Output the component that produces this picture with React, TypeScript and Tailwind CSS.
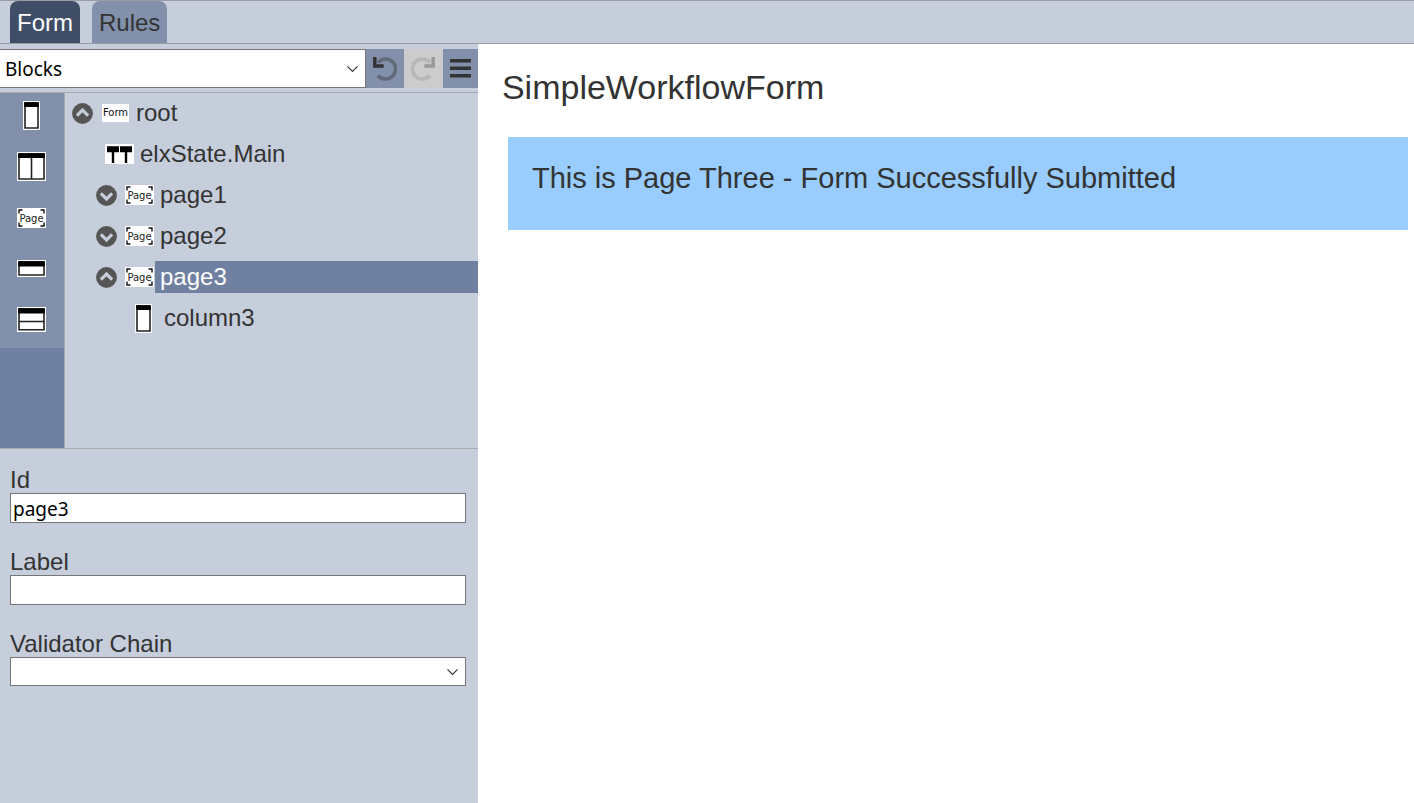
import { useState } from "react";
import type { ReactNode } from "react";
import clsx from "clsx";

function FormIcon() {
  return (
    <svg width="27" height="18" viewBox="0 0 27 18">
      <rect width="27" height="18" fill="#fff" />
      <text x="13.5" y="12" fontSize="10" textAnchor="middle" fontFamily="DejaVu Sans, sans-serif" fill="#111">
        Form
      </text>
    </svg>
  );
}

function PageIcon() {
  return (
    <svg width="29" height="20" viewBox="0 0 29 20">
      <rect width="29" height="20" fill="#fff" />
      <path
        d="M5.5 2H2v3.5M23.5 2H27v3.5M5.5 18H2v-3.5M23.5 18H27v-3.5"
        fill="none"
        stroke="#111"
        strokeWidth="1.4"
      />
      <text x="14.5" y="14" fontSize="10" textAnchor="middle" fontFamily="DejaVu Sans, sans-serif" fill="#222">
        Page
      </text>
    </svg>
  );
}

function StateIcon() {
  return (
    <svg width="29" height="20" viewBox="0 0 29 20">
      <rect width="29" height="20" fill="#fff" />
      <path d="M2 2.2h12v6H2zM15 2.2h12v6H15zM6.8 8h2.4v11H6.8zM19.8 8h2.4v11h-2.4z" fill="#000" />
    </svg>
  );
}

function ColumnIcon() {
  return (
    <svg width="17" height="29" viewBox="0 0 17 29">
      <rect width="17" height="29" fill="#fff" />
      <path d="M2 2h13v25H2z" fill="#fff" stroke="#222" strokeWidth="1.6" />
      <path d="M1.2 1.2h14.6V6H1.2z" fill="#000" />
    </svg>
  );
}

function ColumnsIcon() {
  return (
    <svg width="29" height="29" viewBox="0 0 29 29">
      <rect width="29" height="29" fill="#fff" />
      <path d="M2 2h25v25H2zM14.5 6v21" fill="#fff" stroke="#222" strokeWidth="1.6" />
      <path d="M1.2 1.2h26.6V6H1.2z" fill="#000" />
    </svg>
  );
}

function ContainerIcon() {
  return (
    <svg width="29" height="17" viewBox="0 0 29 17">
      <rect width="29" height="17" fill="#fff" />
      <path d="M2 2h25v13H2z" fill="#fff" stroke="#222" strokeWidth="1.6" />
      <path d="M1.2 1.2h26.6V6.5H1.2z" fill="#000" />
    </svg>
  );
}

function RowsIcon() {
  return (
    <svg width="29" height="25" viewBox="0 0 29 25">
      <rect width="29" height="25" fill="#fff" />
      <path d="M2 2h25v20.8H2zM2 14.5h25" fill="#fff" stroke="#222" strokeWidth="1.6" />
      <path d="M1.2 1.2h26.6V6.5H1.2z" fill="#000" />
    </svg>
  );
}

function ToggleIcon({ open }: { open: boolean }) {
  return (
    <svg width="21" height="21" viewBox="0 0 21 21" fill="none">
      <circle cx="10.5" cy="10.5" r="10.4" fill="#555" />
      <path
        d={open ? "M4.9 12.6l5.6-5.5 5.6 5.5" : "M4.9 8.4l5.6 5.5 5.6-5.5"}
        stroke="#c7cedb"
        strokeWidth="3.2"
      />
    </svg>
  );
}

function UndoIcon() {
  return (
    <svg width="24" height="24" viewBox="0 0 24 24" fill="none">
      <path d="M5 5.5A10 10 0 1 1 5 18.5" stroke="currentColor" strokeWidth="3.6" opacity="0.4" />
      <path d="M1.8 0v9H10.6" stroke="currentColor" strokeWidth="3.5" />
    </svg>
  );
}

function Arrow() {
  return (
    <svg
      className="pointer-events-none absolute right-2 top-1/2 -translate-y-1/2"
      width="11"
      height="7"
      viewBox="0 0 11 7"
      fill="none"
    >
      <path d="M0.5 0.8l5 5 5-5" stroke="#333" strokeWidth="1.2" />
    </svg>
  );
}

type TreeNode = {
  id: string;
  level: string;
  icon: ReactNode;
  open?: boolean;
};

const nodes: TreeNode[] = [
  { id: "root", level: "pl-[7px]", icon: <FormIcon />, open: true },
  { id: "elxState.Main", level: "pl-10", icon: <StateIcon /> },
  { id: "page1", level: "pl-[31px]", icon: <PageIcon />, open: false },
  { id: "page2", level: "pl-[31px]", icon: <PageIcon />, open: false },
  { id: "page3", level: "pl-[31px]", icon: <PageIcon />, open: true },
  { id: "column3", level: "pl-16", icon: <ColumnIcon /> },
];

const blocks = [
  { name: "Column", icon: <ColumnIcon /> },
  { name: "Columns", icon: <ColumnsIcon /> },
  { name: "Page", icon: <PageIcon /> },
  { name: "Container", icon: <ContainerIcon /> },
  { name: "Rows", icon: <RowsIcon /> },
];

const fieldStyle = "font-['Noto_Sans',sans-serif] text-[19px] text-black border border-[#767676] bg-white pt-0.5";

export default function App() {
  const [selected, setSelected] = useState("page3");

  return (
    <div className="flex min-h-screen flex-col bg-white font-['Liberation_Sans',Arial,sans-serif] text-2xl text-[#333]">
      <nav className="flex h-11 gap-3 border-y border-[#999ca3] bg-[#c7cedb] px-2.5">
        <button className="rounded-t-lg bg-[#3f4d67] px-[7px] pt-0.5 text-white">Form</button>
        <button className="rounded-t-lg bg-[#8290ab] px-[7px] pt-0.5">Rules</button>
      </nav>

      <div className="flex flex-1">
        <aside className="w-[33.8%] bg-[#c7cedb]">
          <div className="flex h-12 pt-[5px] pb-1">
            <div className="relative flex-1">
              <select
                aria-label="Palette"
                className={`${fieldStyle} h-full w-full appearance-none border-l-0 pl-[5px]`}
              >
                <option>Blocks</option>
              </select>
              <Arrow />
            </div>
            <button aria-label="Undo" className="flex w-[38px] items-center justify-center bg-[#8290ab]">
              <UndoIcon />
            </button>
            <button
              aria-label="Redo"
              disabled
              className="flex w-[39px] items-center justify-center bg-[#ccc] text-[#999]"
            >
              <span className="-scale-x-100">
                <UndoIcon />
              </span>
            </button>
            <button aria-label="Menu" className="flex w-[35px] items-center justify-center bg-[#8290ab]">
              <svg width="21" height="19" viewBox="0 0 21 19">
                <path d="M0 0h21v3.4H0zM0 7.6h21V11H0zM0 15h21v3.4H0z" fill="#333" />
              </svg>
            </button>
          </div>

          <div className="flex min-h-[357px] border-y border-[#aaa]">
            <div className="w-[65px] border-r border-[#aaa] bg-[#7080a0]">
              {blocks.map((block) => (
                <button
                  key={block.name}
                  aria-label={block.name}
                  className="flex h-[51px] w-full items-center justify-center bg-[#8290ab] pr-px pb-1.5"
                >
                  {block.icon}
                </button>
              ))}
            </div>

            <ul className="flex flex-1 flex-col gap-[9px] pt-1">
              {nodes.map((node) => (
                <li key={node.id} className={clsx("flex h-8 items-center", node.level)}>
                  {node.open !== undefined && (
                    <button aria-label={`Toggle ${node.id}`} className="mr-2">
                      <ToggleIcon open={node.open} />
                    </button>
                  )}
                  <span className="mr-px flex w-[29px] justify-center">{node.icon}</span>
                  <button
                    onClick={() => setSelected(node.id)}
                    className={clsx(
                      "h-full flex-1 pb-px pl-[5px] text-left",
                      selected === node.id && "bg-[#7080a0] text-white"
                    )}
                  >
                    {node.id}
                  </button>
                </li>
              ))}
            </ul>
          </div>

          <form className="flex flex-col gap-[26px] py-[18px] pr-3 pl-2.5">
            <div>
              <label htmlFor="id" className="block leading-[26px]">
                Id
              </label>
              <input id="id" defaultValue="page3" className={`${fieldStyle} block h-[30px] w-full px-0.5`} />
            </div>
            <div>
              <label htmlFor="label" className="block leading-[26px]">
                Label
              </label>
              <input id="label" className={`${fieldStyle} block h-[30px] w-full px-0.5`} />
            </div>
            <div>
              <label htmlFor="validator" className="block leading-[26px]">
                Validator Chain
              </label>
              <div className="relative">
                <select id="validator" className={`${fieldStyle} block h-[29px] w-full appearance-none px-0.5`}>
                  <option></option>
                </select>
                <Arrow />
              </div>
            </div>
          </form>
        </aside>

        <main className="flex-1 pt-[23px] pr-1.5 pl-6">
          <h1 className="text-[34px] leading-10">SimpleWorkflowForm</h1>
          <section className="mt-[30px] ml-1.5 bg-[#99ccff] px-6 pt-6 pb-[35px]">
            <p className="text-[29px] leading-[34px]">This is Page Three - Form Successfully Submitted</p>
          </section>
        </main>
      </div>
    </div>
  );
}
